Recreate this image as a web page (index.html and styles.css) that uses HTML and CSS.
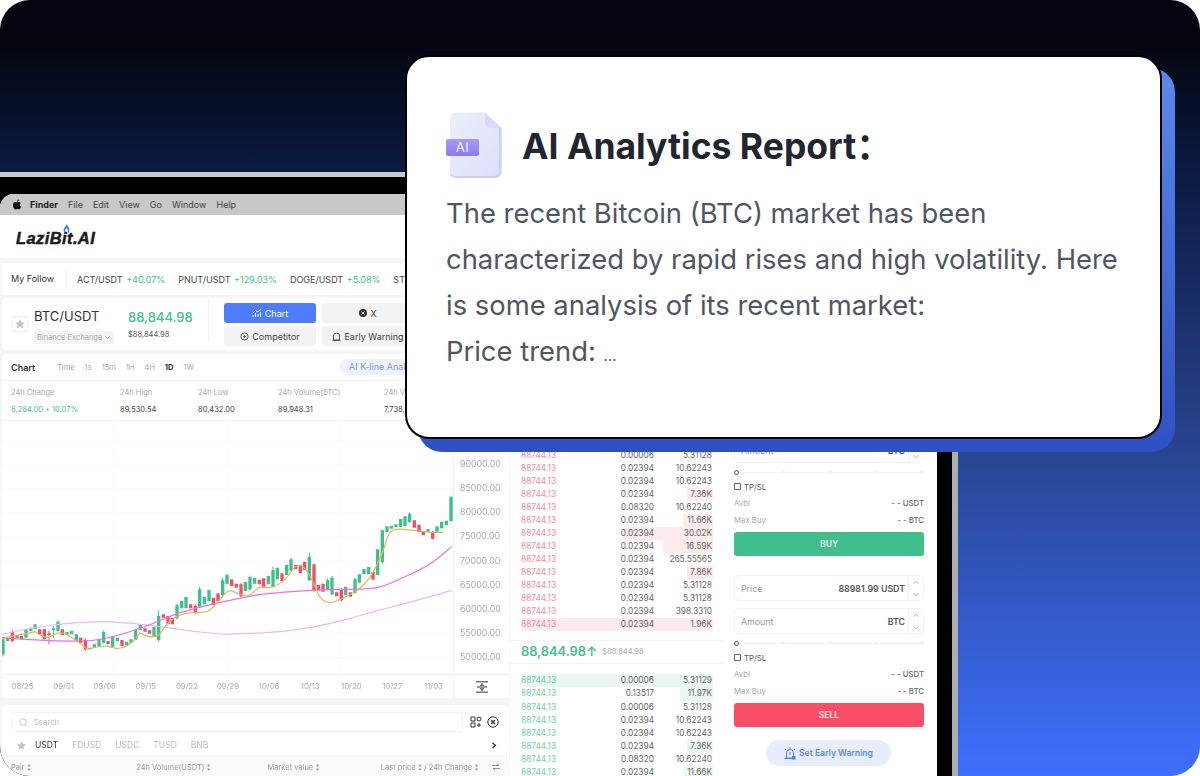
FILE: index.html
```html
<!DOCTYPE html>
<html>
<head>
    <meta charset="utf-8">
    <title>AI Analytics Report</title>
    <link rel="stylesheet" href="styles.css">
</head>
<body>
<svg class="defs" width="0" height="0">
    <symbol id="up" viewBox="0 0 10 6"><path d="M2 4.500L5 1.500L8 4.500" fill="none" stroke="#999" stroke-width="1"/></symbol>
    <symbol id="down" viewBox="0 0 10 6"><path d="M2 1.500L5 4.500L8 1.500" fill="none" stroke="#999" stroke-width="1"/></symbol>
    <symbol id="star" viewBox="0 0 24 24"><path d="M12 2l3 6.600 7 .8-5.200 4.800 1.400 7.100L12 17.700l-6.200 3.600 1.400-7.100L2 9.400l7-.8z" fill="#c4c4c4"/></symbol>
</svg>

<div class="hero">
    <div class="laptop">
        <div class="screen">
            <div class="menubar">
                <svg class="apple" viewBox="0 0 24 24"><path d="M12.152 6.896c-.948 0-2.415-1.078-3.960-1.040-2.040.027-3.910 1.183-4.961 3.014-2.117 3.675-.546 9.103 1.519 12.090 1.013 1.454 2.208 3.090 3.792 3.039 1.520-.065 2.090-.987 3.935-.987 1.831 0 2.350.987 3.960.948 1.637-.026 2.676-1.480 3.676-2.948 1.156-1.688 1.636-3.325 1.662-3.415-.039-.013-3.182-1.221-3.220-4.857-.026-3.040 2.480-4.494 2.597-4.559-1.429-2.090-3.623-2.324-4.390-2.376-2-.156-3.675 1.090-4.610 1.090zM15.530 3.830c.843-1.012 1.400-2.427 1.245-3.830-1.207.052-2.662.805-3.532 1.818-.780.896-1.454 2.338-1.273 3.714 1.338.104 2.715-.688 3.559-1.701"/></svg>
                <b>Finder</b><span>File</span><span>Edit</span><span>View</span><span>Go</span><span>Window</span><span>Help</span>
            </div>
            <div class="logobar">
                <div class="logo">LaziBit.AI
                    <svg class="flame" viewBox="0 0 8 12"><path d="M4 0c.5 2 3.500 3.500 3.500 7.500 0 2-1.200 3-1.800 3.500L5.500 7 4 5 2.500 7 2.300 11C1.500 10.500.5 9.500.5 7.500.5 5 3 3.500 4 0z" fill="#3f7bff"/></svg>
                </div>
            </div>
            <div class="follow">
                <span class="follow-title">My Follow</span>
                <span class="pair">ACT/USDT <em>+40.07%</em></span>
                <span class="pair">PNUT/USDT <em>+129.03%</em></span>
                <span class="pair">DOGE/USDT <em>+5.08%</em></span>
                <span class="pair">STX/USDT</span>
            </div>

            <div class="main">
                <div class="left">
                    <div class="symbol">
                        <div class="star-box"><svg><use href="#star"/></svg></div>
                        <div class="symbol-name">
                            <div class="name">BTC/USDT</div>
                            <div class="exchange">Binance Exchange <svg width="7" height="5"><use href="#down"/></svg></div>
                        </div>
                        <div class="symbol-price">
                            <div class="big-price">88,844.98</div>
                            <div class="usd-price">$88,844.98</div>
                        </div>
                        <div class="tabs">
                            <div class="tab active">
                                <svg width="10" height="10" viewBox="0 0 10 10"><path d="M1 9V7M3.500 9V5M6 9V6M8.500 9V4M1 5l2.500-2.500L6 4l3-3" fill="none" stroke="#fff" stroke-width="1"/></svg>
                                Chart</div>
                            <div class="tab">
                                <svg width="8" height="8" viewBox="0 0 8 8"><circle cx="4" cy="4" r="4" fill="#333"/><path d="M2.500 2.500l3 3M5.500 2.500l-3 3" stroke="#fff" stroke-width=".8"/></svg>
                                X</div>
                            <div class="tab">
                                <svg width="9" height="9" viewBox="0 0 9 9"><circle cx="4.500" cy="4.500" r="3.600" fill="none" stroke="#444" stroke-width=".9"/><path d="M3 4.500h3M4.500 3v3" stroke="#444" stroke-width=".8"/></svg>
                                Competitor</div>
                            <div class="tab">
                                <svg width="9" height="9" viewBox="0 0 9 9"><path d="M1.500 8V4a3 3 0 0 1 6 0v4zM.5 8.200h8" fill="none" stroke="#444" stroke-width=".9"/></svg>
                                Early Warning</div>
                        </div>
                    </div>

                    <div class="chart-card">
                        <div class="chart-head">
                            <b>Chart</b>
                            <div class="periods">
                                <span>Time</span><span>1s</span><span>15m</span><span>1H</span><span>4H</span><span class="on">1D</span><span>1W</span>
                            </div>
                            <div class="ai-pill">AI K-line Analysis</div>
                        </div>
                        <div class="stats">
                            <div class="stat w1"><label>24h Change</label><span class="green">8,284.00 + 10.07%</span></div>
                            <div class="stat w2"><label>24h High</label><span>89,530.54</span></div>
                            <div class="stat w3"><label>24h Low</label><span>80,432.00</span></div>
                            <div class="stat w4"><label>24h Volume(BTC)</label><span>89,948.31</span></div>
                            <div class="stat"><label>24h Volume(USDT)</label><span>7,738,291.20</span></div>
                        </div>
                        <div class="chart-body">
                            <svg class="plot" viewBox="6 0 1353 759">
                                <path class="grid-lines" d="M0 58H1365M0 130H1365M0 203H1365M0 275H1365M0 348H1365M0 420H1365M0 492H1365M0 565H1365M0 637H1365M0 710H1365M343 0V759M683 0V759M1022 0V759"/>
                                <!-- wicks -->
                                <path class="wick-g" d="M9 650V706M160 615V652M174 598V632M311 628V668M476 568V662M531 548V596M599 498V560M668 470V525M681 458V490M750 464V508"/>
                                <path class="wick-r" d="M147 630V670M256 652V690M37 628V664M586 550V580M723 486V530"/>
                                <g transform="translate(750 0)">
                                    <path class="wick-g" d="M178 395V480M123 410V450M69 437V500M233 472V508M246 465V522M315 470V518M397 325V428M479 275V305M603 224V302"/>
                                    <path class="wick-r" d="M274 502V542M192 428V512M548 330V356"/>
                                </g>
                                <!-- candles traced from the daily bars -->
                                <path class="bar-g" d="M9 655V700M23 650V660M51 642V652M78 625V650M92 620V630M105 610V625M160 622V627M174 602V630M201 633V643M215 630V640M229 640V660M270 680V685M283 670V680M297 657V675M311 633V665M338 645V677M352 650V660M380 662V672M393 655V665M407 627V657M421 610V627M462 618V645M476 585V657M531 552V592M545 540V562M558 528V562M599 505V557M613 528V550M627 507V540M668 478V522M681 462V488M736 483V510M750 468V505"/>
                                <path class="bar-r" d="M37 633V660M64 645V655M119 625V640M133 625V655M147 637V642M187 625V642M242 650V665M256 657V685M324 660V670M366 657V675M435 622V632M449 628V638M490 580V590M504 585V610M517 590V610M572 550V562M586 555V575M640 530V552M654 517V540M695 475V495M709 488V500M723 490V526"/>
                                <g transform="translate(750 0)">
                                    <path class="bar-g" d="M14 470V488M55 465V490M69 447V498M82 440V475M110 432V462M123 415V448M178 407V478M233 478V505M246 470V520M287 497V522M315 475V515M328 460V485M342 444V460M356 438V460M383 385V462M397 328V424M411 316V333M424 315V323M438 310V318M452 294V318M465 286V315M479 278V303M534 324V332M561 316V332M575 302V322M589 299V313M603 228V300"/>
                                    <path class="bar-r" d="M28 476V490M41 472V497M96 457V480M137 432V445M151 432V456M164 422V447M192 430V510M205 492V507M219 488V512M260 514V526M274 507V538M301 514V527M369 453V476M493 298V320M507 311V333M520 330V342M548 333V353"/>
                                </g>
                                <path class="ma-slow" d="M5 640C100 618 200 603 300 602S500 622 600 633 710 638 780 636 960 618 1050 592 1250 540 1355 508"/>
                                <path class="ma-mid" d="M5 650C100 658 170 662 250 660S430 620 500 590 700 535 780 520C880 510 950 505 1050 505S1150 495 1220 465 1310 415 1355 377"/>
                                <path class="ma-fast" d="M5 652C40 645 70 640 105 632 125 645 140 657 165 640S225 655 262 685C290 678 315 670 340 680S400 668 420 635C445 650 470 657 490 625S540 575 585 575 630 570 660 535 685 505 720 520 750 515 780 498C815 505 850 490 875 450S925 445 950 510 1025 532 1060 515 1125 450 1145 400 1160 340 1180 327 1300 345 1330 332 1355 315"/>
                            </svg>
                            <div class="price-axis">
                                <span>90000.00</span><span>85000.00</span><span>80000.00</span><span>75000.00</span><span>70000.00</span><span>65000.00</span><span>60000.00</span><span>55000.00</span><span>50000.00</span>
                            </div>
                        </div>
                        <div class="time-row">
                            <div class="times">
                                <span>08/25</span><span>09/01</span><span>09/08</span><span>09/15</span><span>09/22</span><span>09/29</span><span>10/06</span><span>10/13</span><span>10/20</span><span>10/27</span><span>11/03</span>
                            </div>
                            <div class="fit-btn">
                                <svg width="12" height="12" viewBox="0 0 12 12"><path d="M0 .8h12M0 11.200h12M1 6h10" stroke="#777" stroke-width="1.500"/><path d="M6 1.500L3.500 5h5zM6 10.500L3.500 7h5z" fill="#777"/></svg>
                            </div>
                        </div>
                    </div>

                    <div class="market">
                        <div class="search-row">
                            <div class="search">
                                <svg width="9" height="9" viewBox="0 0 9 9"><circle cx="4" cy="4" r="3.200" fill="none" stroke="#bbb" stroke-width=".8"/><path d="M6.400 6.400L8.500 8.500" stroke="#bbb" stroke-width=".8"/></svg>
                                Search
                            </div>
                            <svg width="12" height="12" viewBox="0 0 12 12"><path d="M1 1h4v4H1zM1 7h4v4H1zM9 7v4M7 9h4" fill="none" stroke="#333" stroke-width="1"/><circle cx="9" cy="3" r="2" fill="none" stroke="#333"/></svg>
                            <svg width="12" height="12" viewBox="0 0 12 12"><circle cx="6" cy="6" r="5.200" fill="none" stroke="#333" stroke-width="1"/><path d="M4 4l4 4M8 4l-4 4" stroke="#333" stroke-width="1.300"/></svg>
                        </div>
                        <div class="quote-row">
                            <svg width="11" height="11"><use href="#star"/></svg>
                            <span class="on">USDT</span><span>FDUSD</span><span>USDC</span><span>TUSD</span><span>BNB</span>
                            <svg class="more" width="6" height="7" viewBox="0 0 6 7"><path d="M1.500 1L4.500 3.500 1.500 6" fill="none" stroke="#222" stroke-width="1.200"/></svg>
                        </div>
                        <div class="sort-row">
                            <span class="s1">Pair ⁑</span><span class="s2">24h Volume(USDT) ⁑</span><span class="s3">Market value ⁑</span><span class="s4">Last price ⁑ / 24h Change ⁑</span>
                            <svg width="8" height="8" viewBox="0 0 8 8"><path d="M0 2.500h7M5 .8L7 2.500M8 5.500H1M3 7.200L1 5.500" fill="none" stroke="#777" stroke-width=".8"/></svg>
                        </div>
                    </div>
                </div>

                <div class="book">
                    <div class="rows asks">
                        <div class="row"><span>88744.13</span><span>0.00006</span><span>5.31128</span></div>
                        <div class="row"><span>88744.13</span><span>0.02394</span><span>10.62243</span></div>
                        <div class="row"><span>88744.13</span><span>0.02394</span><span>10.62243</span></div>
                        <div class="row" style="--depth:26px"><span>88744.13</span><span>0.02394</span><span>7.36K</span></div>
                        <div class="row"><span>88744.13</span><span>0.08320</span><span>10.62240</span></div>
                        <div class="row" style="--depth:30px"><span>88744.13</span><span>0.02394</span><span>11.66K</span></div>
                        <div class="row" style="--depth:89px"><span>88744.13</span><span>0.02394</span><span>30.02K</span></div>
                        <div class="row" style="--depth:50px"><span>88744.13</span><span>0.02394</span><span>16.59K</span></div>
                        <div class="row"><span>88744.13</span><span>0.02394</span><span>265.55565</span></div>
                        <div class="row" style="--depth:26px"><span>88744.13</span><span>0.02394</span><span>7.86K</span></div>
                        <div class="row"><span>88744.13</span><span>0.02394</span><span>5.31128</span></div>
                        <div class="row"><span>88744.13</span><span>0.02394</span><span>5.31128</span></div>
                        <div class="row"><span>88744.13</span><span>0.02394</span><span>398.3310</span></div>
                        <div class="row" style="--depth:191px"><span>88744.13</span><span>0.02394</span><span>1.96K</span></div>
                    </div>
                    <div class="mid">
                        <span class="mid-price">88,844.98↑</span>
                        <span class="mid-usd">$88,844.98</span>
                    </div>
                    <div class="rows bids">
                        <div class="row" style="--depth:191px"><span>88744.13</span><span>0.00006</span><span>5.31129</span></div>
                        <div class="row" style="--depth:33px"><span>88744.13</span><span>0.13517</span><span>11.97K</span></div>
                        <div class="row"><span>88744.13</span><span>0.00006</span><span>5.31128</span></div>
                        <div class="row"><span>88744.13</span><span>0.02394</span><span>10.62243</span></div>
                        <div class="row"><span>88744.13</span><span>0.02394</span><span>10.62243</span></div>
                        <div class="row" style="--depth:26px"><span>88744.13</span><span>0.02394</span><span>7.36K</span></div>
                        <div class="row"><span>88744.13</span><span>0.08320</span><span>10.62240</span></div>
                        <div class="row" style="--depth:30px"><span>88744.13</span><span>0.02394</span><span>11.66K</span></div>
                    </div>
                </div>

                <div class="trade">
                    <div class="field">
                        <span>Amount</span><b>BTC</b>
                        <div class="stepper"><svg><use href="#up"/></svg><svg><use href="#down"/></svg></div>
                    </div>
                    <div class="slider"><i class="first"></i><i></i><i></i><i></i><i></i></div>
                    <div class="trade-row tp"><span class="check"></span>TP/SL</div>
                    <div class="trade-row"><span>Avbl</span><b>- - USDT</b></div>
                    <div class="trade-row"><span>Max Buy</span><b>- - BTC</b></div>
                    <div class="action buy">BUY</div>

                    <div class="field gap-top">
                        <span>Price</span><b>88981.99 USDT</b>
                        <div class="stepper"><svg><use href="#up"/></svg><svg><use href="#down"/></svg></div>
                    </div>
                    <div class="field next">
                        <span>Amount</span><b>BTC</b>
                        <div class="stepper"><svg><use href="#up"/></svg><svg><use href="#down"/></svg></div>
                    </div>
                    <div class="slider"><i class="first"></i><i></i><i></i><i></i><i></i></div>
                    <div class="trade-row tp"><span class="check"></span>TP/SL</div>
                    <div class="trade-row"><span>Avbl</span><b>- - USDT</b></div>
                    <div class="trade-row"><span>Max Buy</span><b>- - BTC</b></div>
                    <div class="action sell">SELL</div>

                    <div class="warning">
                        <svg width="12" height="13" viewBox="0 0 12 13"><path d="M2.500 11V6a3.500 3.500 0 0 1 7 0v5zM.5 11.500h9M6 .5v1.500M1 2l1 1M11 2l-1 1M6 5v3" fill="none" stroke="#4d7cfe" stroke-width="1"/><rect x="8" y="9" width="3.500" height="3.500" fill="#4d7cfe"/></svg>
                        Set Early Warning
                    </div>
                </div>
            </div>
        </div>
    </div>

    <div class="report">
        <div class="report-card">
            <div class="report-head">
                <div class="doc">
                    <svg width="52" height="67" viewBox="0 0 52 67">
                        <defs>
                            <linearGradient id="sheet" x1="0" y1="0" x2="1" y2="1">
                                <stop offset="0" stop-color="#eceeff"/>
                                <stop offset="1" stop-color="#dcdffa"/>
                            </linearGradient>
                        </defs>
                        <path d="M6 .5H35L51.500 16V60a6 6 0 0 1-6 6H6a6 6 0 0 1-6-6V6.500a6 6 0 0 1 6-6z" fill="url(#sheet)"/>
                        <path d="M35 .5L51.500 16H41a6 6 0 0 1-6-6z" fill="#d6d9f8"/>
                        <path d="M51.500 16V60a6 6 0 0 1-6 6H6a6 6 0 0 1-6-5a6 5 0 0 0 6 3H44a5 5 0 0 0 5-5V16z" fill="#cdd0f5"/>
                    </svg>
                    <span class="doc-tag">AI</span>
                </div>
                <h1>AI Analytics Report<span class="colon">：</span></h1>
            </div>
            <p>The recent Bitcoin (BTC) market has been characterized by rapid rises and high volatility. Here is some analysis of its recent market:<br>Price trend: <span class="dots">...</span></p>
        </div>
    </div>
</div>
</body>
</html>
```

FILE: styles.css
```css
html, body {
    margin: 0;
    background: #fff;
}

.defs {
    position: absolute;
}

.hero {
    position: relative;
    width: 1200px;
    height: 776px;
    overflow: hidden;
    border-radius: 30px;
    background: linear-gradient(#03050f 5%, #0b1a42 22%, #264189 55%, #3f6fff 100%);
    font-family: "Inter", "Liberation Sans", sans-serif;
}

.laptop {
    box-sizing: border-box;
    width: 958px;
    height: 604px;
    margin-top: 172px;
    padding: 17px 15px 0 0;
    background: #000;
    border-top: 5px solid #c9c9c9;
    border-right: 6px solid #aeaeae;
}

.screen {
    height: 582px;
    overflow: hidden;
    border-top-left-radius: 14px;
    background: #f6f6f6;
    color: #333;
    filter: blur(.4px);
}

/* mac menu bar */
.menubar {
    display: flex;
    align-items: center;
    gap: 10px;
    height: 21px;
    padding-left: 12px;
    background: #c8c8c8;
    font-size: 9px;
    color: #444;
}

.menubar b {
    margin-left: -2px;
    color: #222;
}

.apple {
    width: 10px;
    height: 11px;
    fill: #111;
}

.logobar {
    box-sizing: border-box;
    height: 43px;
    display: flex;
    align-items: center;
    padding: 3px 0 0 16px;
    background: #fff;
}

.logo {
    position: relative;
    font-family: "Liberation Sans", sans-serif;
    font-size: 16.500px;
    font-weight: 700;
    font-style: italic;
    letter-spacing: .4px;
    color: #1c1c1c;
    -webkit-text-stroke: .5px #1c1c1c;
}

.flame {
    position: absolute;
    left: 47px;
    top: -5px;
    width: 7px;
    height: 10px;
}

.follow {
    display: flex;
    align-items: center;
    height: 32px;
    margin: 5px 0 3px 2px;
    padding-left: 9px;
    border-radius: 4px;
    background: #fff;
    font-size: 9px;
    white-space: nowrap;
    overflow: hidden;
}

.follow-title {
    width: 55px;
    height: 18px;
    line-height: 18px;
    margin-right: 10px;
    border-right: 1px solid #eee;
}

.pair {
    margin-right: 13px;
    color: #444;
}

.pair em {
    font-style: normal;
    margin-left: 1px;
    color: #43c08e;
}

.main {
    display: grid;
    grid-template-columns: 510px 213px 1fr;
}

.left {
    margin-left: 2px;
    width: 507px;
    overflow: hidden;
}

/* symbol summary */
.symbol {
    display: flex;
    align-items: flex-start;
    height: 52px;
    border-radius: 4px;
    background: #fff;
    white-space: nowrap;
}

.star-box {
    box-sizing: border-box;
    width: 16px;
    height: 16px;
    margin: 18px 6px 0 10px;
    padding: 1px;
    border: 1px solid #eee;
    border-radius: 3px;
}

.star-box svg {
    display: block;
    width: 12px;
    height: 12px;
}

.symbol-name {
    width: 94px;
    padding-top: 10px;
}

.name {
    font-size: 13px;
    line-height: 16px;
    color: #333;
}

.exchange {
    display: inline-block;
    margin-top: 3px;
    padding: 0 3px;
    height: 13px;
    line-height: 13px;
    border-radius: 2px;
    background: #f4f4f4;
    font-size: 7.500px;
    color: #aaa;
}

.symbol-price {
    width: 80px;
    padding-top: 10px;
    border-right: 1px solid #f2f2f2;
    height: 34px;
}

.big-price {
    font-size: 13px;
    line-height: 19px;
    font-weight: 500;
    color: #43c08e;
}

.usd-price {
    margin-top: 3px;
    font-size: 7.500px;
    color: #555;
}

.tabs {
    display: grid;
    grid-template-columns: 92px 92px;
    gap: 3px 6px;
    margin: 5px 0 0 15px;
}

.tab {
    display: flex;
    align-items: center;
    justify-content: center;
    gap: 3px;
    height: 20px;
    border-radius: 3px;
    background: #f3f3f3;
    font-size: 9px;
    color: #444;
}

.tab.active {
    background: #4d7cfe;
    color: #fff;
}

/* chart */
.chart-card {
    margin-top: 4px;
    background: #fff;
    border-radius: 4px;
    overflow: hidden;
}

.chart-head {
    display: flex;
    align-items: center;
    height: 26px;
    padding-left: 9px;
    font-size: 9px;
}

.chart-head b {
    font-weight: 600;
    width: 46px;
}

.periods {
    display: flex;
    gap: 10px;
    font-size: 7.500px;
    color: #aaa;
}

.periods .on {
    color: #333;
    font-weight: 700;
}

.ai-pill {
    margin-left: auto;
    margin-right: 30px;
    width: 130px;
    height: 16px;
    line-height: 16px;
    padding-left: 9px;
    border-radius: 8px;
    background: #eef2ff;
    color: #7b97ff;
    white-space: nowrap;
}

.stats {
    display: flex;
    height: 39px;
    padding-left: 9px;
    border-top: 1px solid #f3f3f3;
    border-bottom: 1px solid #f3f3f3;
    font-size: 7.500px;
}

.stat {
    display: flex;
    flex-direction: column;
    gap: 8px;
    padding-top: 7px;
    white-space: nowrap;
    color: #444;
}

.stat label {
    color: #aaa;
}

.stat .green {
    color: #43c08e;
}

.w1 { width: 109px; }
.w2 { width: 78px; }
.w3 { width: 80px; }
.w4 { width: 106px; }

.chart-body {
    display: flex;
    height: 253px;
}

.plot {
    display: block;
    width: 451px;
    height: 253px;
    flex: none;
}

.grid-lines {
    stroke: #f7f7f7;
    stroke-width: 2;
}

.bar-g, .bar-r, .wick-g, .wick-r {
    fill: none;
}

.bar-g { stroke: #3fbf8c; stroke-width: 10; }
.bar-r { stroke: #f84e64; stroke-width: 10; }
.wick-g { stroke: #3fbf8c; stroke-width: 3; }
.wick-r { stroke: #f84e64; stroke-width: 3; }

.ma-fast, .ma-mid, .ma-slow {
    fill: none;
    stroke-width: 3.500;
}

.ma-fast { stroke: #e2b45c; }
.ma-mid { stroke: #ee6fde; }
.ma-slow { stroke: #efb3f7; }

.price-axis {
    flex: 1;
    display: flex;
    flex-direction: column;
    padding: 31px 0 0 6px;
    border-left: 1px solid #f3f3f3;
    font-size: 8.800px;
    line-height: 24.150px;
    color: #aaa;
}

.time-row {
    display: flex;
    height: 23px;
    border-top: 1px solid #f1f1f1;
}

.times {
    width: 451px;
    display: grid;
    grid-template-columns: repeat(11, 41.100px);
    font-size: 7.800px;
    line-height: 22px;
    color: #aaa;
    text-align: center;
}

.fit-btn {
    flex: 1;
    display: flex;
    align-items: center;
    justify-content: center;
    border-left: 1px solid #f3f3f3;
}

/* market list */
.market {
    margin-top: 7px;
    height: 80px;
    padding: 7px 9px 0;
    background: #fff;
    border-radius: 6px;
    filter: blur(.5px);
    white-space: nowrap;
}

.search-row {
    display: flex;
    align-items: center;
    gap: 5px;
}

.search {
    box-sizing: border-box;
    display: flex;
    align-items: center;
    gap: 6px;
    width: 452px;
    height: 20px;
    margin-right: 2px;
    padding-left: 7px;
    border: 1px solid #f2f2f2;
    border-radius: 4px;
    font-size: 7.500px;
    color: #bbb;
}

.quote-row {
    display: flex;
    align-items: center;
    gap: 14px;
    height: 18px;
    margin-top: 4px;
    padding-left: 2px;
    font-size: 8.500px;
    color: #bbb;
}

.quote-row svg:first-child {
    margin: 0 -6px 0 3px;
}

.quote-row .on {
    color: #333;
}

.quote-row .more {
    margin-left: auto;
    margin-right: 3px;
}

.sort-row {
    display: flex;
    align-items: center;
    margin: 1px -9px 0;
    padding: 0 9px;
    height: 24px;
    background: #fafafa;
    font-size: 7.500px;
    color: #999;
}

.s1 { width: 126px; }
.s2 { width: 132px; }
.s3 { width: 114px; }
.s4 { width: 112px; }

/* order book */
.book {
    box-sizing: border-box;
    height: 480px;
    padding-top: 150.500px;
    background: #fff;
}

.rows {
    padding: 0 10px 0 11px;
}

.row {
    display: grid;
    grid-template-columns: 66px 67px 58px;
    height: 13.070px;
    line-height: 13px;
    font-size: 8.300px;
    color: #666;
    text-align: right;
}

.row span:first-child {
    text-align: left;
}

.asks .row {
    background: linear-gradient(to left, #fdeaec var(--depth, 0), transparent var(--depth, 0));
}

.asks .row span:first-child {
    color: #f58a98;
}

.bids .row {
    background: linear-gradient(to left, #ebf6f1 var(--depth, 0), transparent var(--depth, 0));
}

.bids .row span:first-child {
    color: #6fd0a8;
}

.mid {
    display: flex;
    align-items: center;
    gap: 5px;
    height: 22px;
    margin: 8.500px 0 10.500px;
    padding-left: 11px;
    border-top: 1px solid #f3f3f3;
    border-bottom: 1px solid #f3f3f3;
    white-space: nowrap;
}

.mid-price {
    font-size: 12.800px;
    font-weight: 600;
    color: #43c08e;
}

.mid-usd {
    font-size: 7.500px;
    color: #aaa;
}

/* buy / sell form */
.trade {
    box-sizing: border-box;
    height: 480px;
    padding: 139px 13px 0 11px;
    background: #fff;
    font-size: 7.800px;
    color: #444;
    white-space: nowrap;
}

.field {
    box-sizing: border-box;
    display: flex;
    align-items: center;
    height: 26px;
    padding-left: 6px;
    border: 1px solid #f1f1f1;
    border-radius: 6px;
    font-size: 8.800px;
    color: #999;
}

.field b {
    margin-left: auto;
    margin-right: 3px;
    font-weight: 600;
    color: #555;
}

.field.gap-top {
    margin-top: 19px;
}

.field.next {
    margin-top: 7px;
}

.stepper {
    display: flex;
    flex-direction: column;
    justify-content: space-around;
    align-items: center;
    width: 14px;
    height: 100%;
    border-left: 1px solid #f1f1f1;
}

.stepper svg {
    width: 8px;
    height: 5px;
}

.slider {
    display: flex;
    justify-content: space-between;
    align-items: center;
    height: 10px;
    margin: 4px 0 2.500px;
    background: linear-gradient(#f2f2f2, #f2f2f2) center / 100% 1px no-repeat;
}

.slider i {
    box-sizing: border-box;
    width: 4px;
    height: 4px;
    border-radius: 50%;
    background: #f2f2f2;
}

.slider i.first {
    width: 5px;
    height: 5px;
    background: #fff;
    border: 1px solid #555;
}

.trade-row {
    display: flex;
    align-items: center;
    justify-content: space-between;
    height: 14px;
    margin-bottom: 2.500px;
    color: #aaa;
}

.trade-row b {
    font-weight: 500;
    color: #666;
}

.trade-row.tp {
    justify-content: flex-start;
    gap: 3px;
    color: #555;
}

.check {
    box-sizing: border-box;
    width: 7px;
    height: 7px;
    border: 1px solid #666;
    border-radius: 1px;
}

.action {
    height: 24px;
    margin-top: 5.500px;
    line-height: 24px;
    border-radius: 3px;
    text-align: center;
    font-size: 8.500px;
    font-weight: 600;
    color: #e8f6f0;
}

.buy { background: #40bf8c; }
.sell { background: #f94e65; color: #ffe9ec; }

.warning {
    display: flex;
    align-items: center;
    justify-content: center;
    gap: 3px;
    width: 125px;
    height: 26px;
    margin: 13px 0 0 32px;
    border-radius: 13px;
    background: #e7edfd;
    font-size: 8.600px;
    font-weight: 600;
    color: #5a87fb;
}

/* report card on top of the laptop */
.report {
    position: absolute;
    left: 405px;
    top: 55px;
    width: 757px;
    height: 384px;
}

.report::before {
    content: "";
    position: absolute;
    inset: 13px -13px -13px 13px;
    border-radius: 24px;
    background: linear-gradient(#5c88e8, #2f50c2);
}

.report-card {
    position: relative;
    box-sizing: border-box;
    height: 100%;
    padding: 55px 38px 0 39px;
    background: #fff;
    border: 2px solid #000;
    border-radius: 24px;
}

.report-head {
    display: flex;
    align-items: center;
    gap: 21px;
}

.doc {
    position: relative;
    flex: none;
    width: 56px;
    height: 67px;
    display: flex;
    justify-content: flex-end;
}

.doc-tag {
    position: absolute;
    left: 0;
    top: 27px;
    width: 33px;
    height: 17px;
    line-height: 17px;
    border-radius: 2px;
    background: linear-gradient(#a79bf5, #8a7cec);
    color: #f3f1ff;
    font-size: 13px;
    letter-spacing: .5px;
    text-align: center;
}

h1 {
    margin: 0 0 4px -1px;
    font-size: 35.500px;
    font-weight: 700;
    color: #1f2630;
    white-space: nowrap;
}

.colon {
    font-family: "Noto Sans CJK SC", sans-serif;
}

.report p {
    width: 680px;
    margin: 10.500px 0 0;
    font-size: 27.400px;
    line-height: 46px;
    color: #505661;
}

.dots {
    font-size: 15px;
}
```
